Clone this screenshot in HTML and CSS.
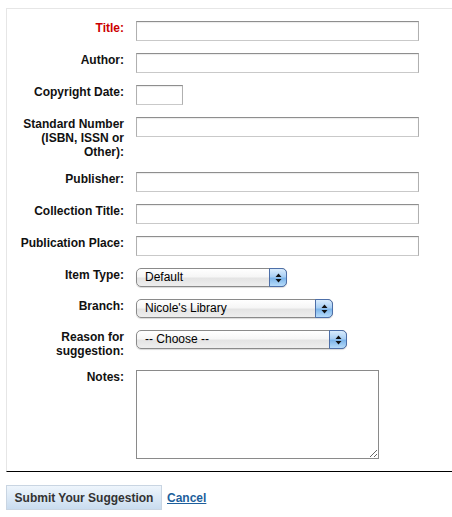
FILE: index.html
```html
<!DOCTYPE html>
<html>
<head>
<meta charset="utf-8">
<title>Purchase suggestion</title>
<link rel="stylesheet" href="styles.css">
</head>
<body>
<form class="suggest">
  <div class="panel">
    <div class="grid">
      <label class="lbl req">Title:</label>
      <div class="field"><input class="txt" type="text"></div>

      <label class="lbl">Author:</label>
      <div class="field"><input class="txt" type="text"></div>

      <label class="lbl">Copyright Date:</label>
      <div class="field"><input class="txt short" type="text"></div>

      <label class="lbl three">Standard Number (ISBN, ISSN or Other):</label>
      <div class="field"><input class="txt" type="text"></div>

      <label class="lbl">Publisher:</label>
      <div class="field"><input class="txt" type="text"></div>

      <label class="lbl">Collection Title:</label>
      <div class="field"><input class="txt" type="text"></div>

      <label class="lbl">Publication Place:</label>
      <div class="field"><input class="txt" type="text"></div>

      <label class="lbl">Item Type:</label>
      <div class="field">
        <div class="sel w150">
          <select><option>Default</option></select>
          <span class="sel-btn"><svg width="7" height="10" viewBox="0 0 7 10"><path d="M3.5 0.5 L6.5 4 L0.5 4 Z M0.5 6 L6.5 6 L3.5 9.5 Z" fill="#111"/></svg></span>
        </div>
      </div>

      <label class="lbl">Branch:</label>
      <div class="field">
        <div class="sel w196">
          <select><option>Nicole's Library</option></select>
          <span class="sel-btn"><svg width="7" height="10" viewBox="0 0 7 10"><path d="M3.5 0.5 L6.5 4 L0.5 4 Z M0.5 6 L6.5 6 L3.5 9.5 Z" fill="#111"/></svg></span>
        </div>
      </div>

      <label class="lbl">Reason for suggestion:</label>
      <div class="field">
        <div class="sel w210">
          <select><option>-- Choose --</option></select>
          <span class="sel-btn"><svg width="7" height="10" viewBox="0 0 7 10"><path d="M3.5 0.5 L6.5 4 L0.5 4 Z M0.5 6 L6.5 6 L3.5 9.5 Z" fill="#111"/></svg></span>
        </div>
      </div>

      <label class="lbl">Notes:</label>
      <div class="field"><textarea class="notes"></textarea></div>
    </div>
  </div>
  <div class="actions">
    <button type="button" class="submit">Submit Your Suggestion</button>
    <a class="cancel" href="#">Cancel</a>
  </div>
</form>
</body>
</html>
```

FILE: styles.css
```css
html, body {
  margin: 0;
  padding: 0;
  background: #fff;
}
body {
  font-family: "Liberation Sans", Arial, sans-serif;
  font-size: 12px;
  color: #000;
  overflow: hidden;
}
.suggest {
  margin: 8px 0 0 6px;
}
.panel {
  border-top: 1px solid #e6e6e6;
  border-left: 1px solid #e6e6e6;
  border-bottom: 1px solid #000;
  padding: 12px 0 12px 0;
}
.grid {
  display: grid;
  grid-template-columns: 117px auto;
  column-gap: 12px;
  row-gap: 12px;
  align-items: start;
}
.lbl {
  font-weight: bold;
  font-size: 12px;
  line-height: 14px;
  text-align: right;
  color: #111;
  padding-left: 10px;
}
.lbl.three {
  padding-bottom: 1px;
}
.lbl.req {
  color: #cc0000;
}
.field {
  display: flex;
}
.txt {
  box-sizing: border-box;
  width: 283px;
  height: 20px;
  margin: 0;
  padding: 1px 3px;
  border: 1px solid #c9c9c9;
  border-top-color: #8e8e8e;
  border-left-color: #b0b0b0;
  border-right-color: #b0b0b0;
  box-shadow: inset 0 1px 1px rgba(0,0,0,0.08);
  background: #fff;
  font-family: "Liberation Sans", Arial, sans-serif;
  font-size: 12px;
  outline: none;
}
.txt.short {
  width: 47px;
}
.sel {
  position: relative;
  box-sizing: border-box;
  height: 19px;
}
.sel.w150 { width: 151px; }
.sel.w196 { width: 197px; }
.sel.w210 { width: 211px; }
.sel select {
  -webkit-appearance: none;
  appearance: none;
  box-sizing: border-box;
  width: 100%;
  height: 19px;
  margin: 0;
  padding: 0 20px 0 8px;
  border: 1px solid #8a8a8a;
  border-radius: 5px;
  background: linear-gradient(to bottom, #ffffff 0%, #f6f6f6 45%, #e4e4e4 55%, #eeeeee 100%);
  font-family: "Liberation Sans", Arial, sans-serif;
  font-size: 12px;
  line-height: 17px;
  color: #000;
  box-shadow: 0 1px 1px rgba(0,0,0,0.15);
}
.sel-btn {
  position: absolute;
  top: 0;
  right: 0;
  box-sizing: border-box;
  width: 18px;
  height: 19px;
  border: 1px solid #4d6fa8;
  border-radius: 0 5px 5px 0;
  background: linear-gradient(to bottom, #d9ecfd 0%, #a9cff4 45%, #7db5ea 55%, #b7dcfa 100%);
  display: flex;
  align-items: center;
  justify-content: center;
  pointer-events: none;
}
.notes {
  box-sizing: border-box;
  width: 243px;
  height: 89px;
  margin: 0;
  padding: 2px;
  border: 1px solid #8a8a8a;
  background: #fff;
  font-family: "Liberation Sans", Arial, sans-serif;
  font-size: 12px;
  resize: both;
  outline: none;
}
.actions {
  display: flex;
  align-items: center;
  gap: 5px;
  margin-top: 13px;
}
.submit {
  box-sizing: border-box;
  width: 156px;
  height: 25px;
  margin: 0;
  padding: 0;
  border: 1px solid #c9d5e2;
  background: linear-gradient(to bottom, #eef5fc 0%, #dce9f6 50%, #c9dcef 100%);
  font-family: "Liberation Sans", Arial, sans-serif;
  font-weight: bold;
  font-size: 12px;
  color: #333;
  text-align: center;
}
.cancel {
  font-weight: bold;
  font-size: 12px;
  color: #1d5f9c;
  text-decoration: underline;
}
```
